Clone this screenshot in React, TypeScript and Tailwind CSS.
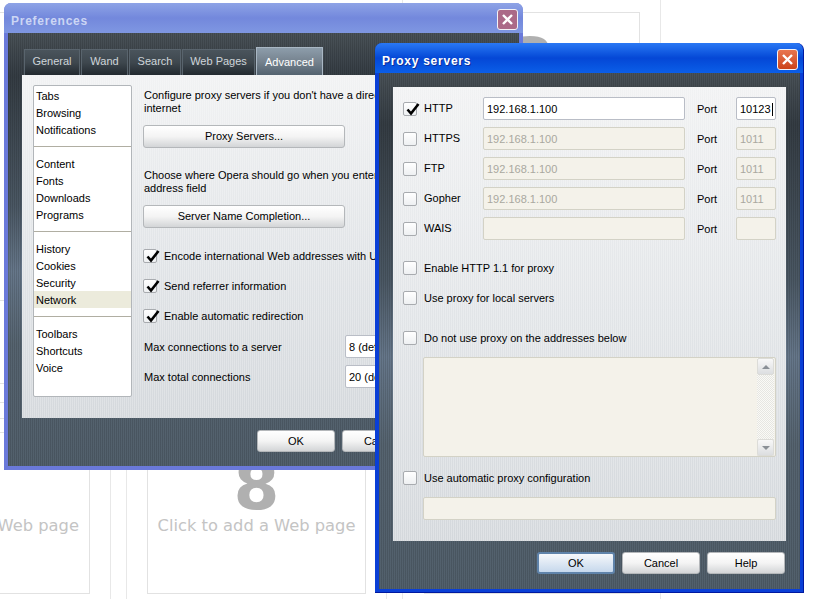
import type { ReactNode } from 'react';

const font = "font-['Liberation_Sans','DejaVu_Sans',sans-serif]";

function Check() {
  return (
    <svg width="16" height="14" viewBox="0 0 16 14" className="absolute left-[1px] top-[-1px] overflow-visible">
      <path d="M2.5 7.5 L6 11.5 L13.5 2" fill="none" stroke="#000" strokeWidth="2.6" />
    </svg>
  );
}

function CheckBox({ checked, raised, children }: { checked?: boolean; raised?: boolean; children?: ReactNode }) {
  return (
    <div className="flex items-center h-4 gap-[7px]">
      <div className="relative w-[14px] h-[14px] shrink-0 rounded-[2px] border border-[#a8abaf] bg-gradient-to-b from-white to-[#eef0f2]">
        {checked && <Check />}
      </div>
      {children && <span className={`whitespace-nowrap leading-none ${raised ? 'pb-[1px]' : ''}`}>{children}</span>}
    </div>
  );
}

function Btn({ children, w, primary }: { children: ReactNode; w: string; primary?: boolean }) {
  return (
    <button
      className={`${w} h-[22px] shrink-0 rounded-[3px] text-black ${
        primary
          ? 'border-2 border-[#5f83aa] bg-gradient-to-b from-[#f6f8fb] to-[#c6d8ec]'
          : 'border border-[#b4b7ba] bg-gradient-to-b from-white via-[#f4f4f4] to-[#d3d5d7]'
      }`}
    >
      {children}
    </button>
  );
}

function Field({ w, value, disabled, caret }: { w: string; value?: string; disabled?: boolean; caret?: boolean }) {
  return (
    <div
      className={`${w} h-[23px] shrink-0 flex items-center px-[3px] pt-[1px] rounded-[2px] border overflow-hidden whitespace-nowrap ${
        disabled ? 'bg-[#f4f2ea] border-[#d3d2c6] text-[#a9a8a0]' : 'bg-white border-[#b9bdc6] text-black'
      }`}
    >
      {value}
      {caret && <span className="inline-block w-px h-[13px] bg-black ml-px shrink-0" />}
    </div>
  );
}

function Tab({ label, w, active }: { label: string; w: string; active?: boolean }) {
  return (
    <div
      className={`${w} flex items-center justify-center border border-b-0 ${
        active
          ? 'h-[28px] pt-[2px] border-[#a9b7c4] text-white bg-gradient-to-b from-[#8d9dab] via-[#76838f] to-[#53626f]'
          : 'h-[26px] pb-[2px] border-[#59646d] text-[#cfd5da] bg-gradient-to-b from-[#4a545c] via-[#3e474e] to-[#232a30]'
      }`}
    >
      {label}
    </div>
  );
}

const bodyBg =
  '[background-image:repeating-linear-gradient(90deg,rgba(0,0,0,0.12)_0px,rgba(0,0,0,0.12)_1px,transparent_1px,transparent_2px),linear-gradient(180deg,#4a5258_0%,#353d44_10%,#4b5864_40%,#66778a_55%,#566470_72%,#52606c_100%)]';
const panelBg =
  '[background-image:repeating-linear-gradient(90deg,rgba(255,255,255,0.25)_0px,rgba(255,255,255,0.25)_1px,transparent_1px,transparent_2px),linear-gradient(180deg,#f1f2f3_0%,#e2e5e8_50%,#d4d8dc_100%)]';

function ListItem({ children, active }: { children: string; active?: boolean }) {
  return (
    <div className={`h-[17px] pt-[1px] leading-[16px] pl-[2px] ${active ? 'bg-[#ecebdc]' : ''}`}>{children}</div>
  );
}

function CloseBtn({ bg }: { bg: string }) {
  return (
    <div className={`${bg} w-[21px] h-[21px] rounded-[3px] border border-[#f2f2f6] flex items-center justify-center`}>
      <svg width="13" height="13" viewBox="0 0 13 13">
        <path d="M2 2 L11 11 M11 2 L2 11" stroke="#fff" strokeWidth="2.4" />
      </svg>
    </div>
  );
}

function Preferences() {
  return (
    <div className="absolute left-[4px] top-[3px] w-[519px] h-[467px] px-[4px] pb-[4px] flex flex-col rounded-t-[7px] bg-[#6a79da]">
      <div className="h-[30px] shrink-0 -mx-[4px] px-[7px] rounded-t-[7px] flex items-center justify-between bg-gradient-to-b from-[#8ea3e6] via-[#7388dc] to-[#7f97e2]">
        <span className="font-['Liberation_Sans',sans-serif] font-bold text-[12px] tracking-[0.75px] pt-[6px] text-[#ccd6f4]">Preferences</span>
        <div className="mr-[-2px] mt-[3px]">
          <CloseBtn bg="bg-[#ab6a88]" />
        </div>
      </div>
      <div className={`flex-1 flex flex-col ${bodyBg}`}>
        <div className="h-[42px] shrink-0 flex items-end gap-px pl-[16px]">
          <Tab label="General" w="w-[56px]" />
          <Tab label="Wand" w="w-[47px]" />
          <Tab label="Search" w="w-[52px]" />
          <Tab label="Web Pages" w="w-[73px]" />
          <Tab label="Advanced" w="w-[67px]" active />
        </div>
        <div className={`ml-[14px] w-[483px] h-[343px] shrink-0 flex pl-[11px] pt-[10px] overflow-hidden ${panelBg}`}>
          <div className="w-[99px] h-[312px] shrink-0 border border-[#b2b6ba] rounded-[2px] bg-white pt-[1px]">
            <ListItem>Tabs</ListItem>
            <ListItem>Browsing</ListItem>
            <ListItem>Notifications</ListItem>
            <div className="h-px bg-[#b0aea2] mt-[8px] mb-[8px]" />
            <ListItem>Content</ListItem>
            <ListItem>Fonts</ListItem>
            <ListItem>Downloads</ListItem>
            <ListItem>Programs</ListItem>
            <div className="h-px bg-[#b0aea2] mt-[8px] mb-[8px]" />
            <ListItem>History</ListItem>
            <ListItem>Cookies</ListItem>
            <ListItem>Security</ListItem>
            <ListItem active>Network</ListItem>
            <div className="h-px bg-[#b0aea2] mt-[8px] mb-[8px]" />
            <ListItem>Toolbars</ListItem>
            <ListItem>Shortcuts</ListItem>
            <ListItem>Voice</ListItem>
          </div>
          <div className="ml-[11px] flex-1 flex flex-col items-start">
            <p className="mt-[4px] ml-px leading-[13px] whitespace-nowrap">
              Configure proxy servers if you don't have a direct connection to the
              <br />
              internet
            </p>
            <div className="mt-[10px]">
              <Btn w="w-[202px] !h-[23px]">Proxy Servers...</Btn>
            </div>
            <p className="mt-[21px] ml-px leading-[13px] whitespace-nowrap">
              Choose where Opera should go when you enter a name in the
              <br />
              address field
            </p>
            <div className="mt-[10px]">
              <Btn w="w-[202px] !h-[23px]">Server Name Completion...</Btn>
            </div>
            <div className="mt-[20px] flex flex-col gap-[14px]">
              <CheckBox checked>Encode international Web addresses with UTF-8</CheckBox>
              <CheckBox checked>Send referrer information</CheckBox>
              <CheckBox checked>Enable automatic redirection</CheckBox>
            </div>
            <div className="mt-[11px] flex items-center">
              <span className="w-[202px] ml-px pt-[1px]">Max connections to a server</span>
              <Field w="w-[100px] -ml-px" value="8 (default)" />
            </div>
            <div className="mt-[7px] flex items-center">
              <span className="w-[202px] ml-px pt-[1px]">Max total connections</span>
              <Field w="w-[100px] -ml-px" value="20 (default)" />
            </div>
          </div>
        </div>
        <div className="mt-[12px] ml-[249px] flex gap-[7px]">
          <Btn w="w-[78px]">OK</Btn>
          <Btn w="w-[78px]">Cancel</Btn>
        </div>
      </div>
    </div>
  );
}

function ProxyRow({ label, value, port, checked, active }: { label: string; value?: string; port?: string; checked?: boolean; active?: boolean }) {
  return (
    <div className="flex items-center h-[23px]">
      <div className="w-[80px] shrink-0">
        <CheckBox checked={checked} raised>{label}</CheckBox>
      </div>
      <Field w="w-[202px]" value={value} disabled={!active} />
      <span className="w-[39px] ml-[12px] pt-[1px]">Port</span>
      <Field w="w-[40px]" value={port} disabled={!active} caret={active} />
    </div>
  );
}

function ProxyServers() {
  return (
    <div className="absolute left-[375px] top-[43px] w-[429px] h-[550px] pl-[4px] pr-[3px] pb-[3px] flex flex-col rounded-t-[7px] bg-[#0a3fd6] border-r border-b border-[#0019a0]">
      <div className="h-[30px] shrink-0 -ml-[4px] -mr-[3px] px-[7px] rounded-t-[7px] flex items-center justify-between bg-gradient-to-b from-[#2a78f4] via-[#0547d6] to-[#0c5ee8]">
        <span className="font-['Liberation_Sans',sans-serif] font-bold text-[12px] tracking-[0.75px] pt-[6px] text-white [text-shadow:1px_1px_0_#0a2f9c]">Proxy servers</span>
        <div className="mr-[-2px] mt-[3px]">
          <CloseBtn bg="bg-gradient-to-b from-[#e8754f] to-[#cc4318]" />
        </div>
      </div>
      <div className={`flex-1 pt-[14px] ${bodyBg}`}>
        <div className={`ml-[14px] w-[393px] h-[454px] pl-[10px] pt-[10px] ${panelBg}`}>
          <div className="flex flex-col gap-[7px]">
            <ProxyRow label="HTTP" value="192.168.1.100" port="10123" checked active />
            <ProxyRow label="HTTPS" value="192.168.1.100" port="1011" />
            <ProxyRow label="FTP" value="192.168.1.100" port="1011" />
            <ProxyRow label="Gopher" value="192.168.1.100" port="1011" />
            <ProxyRow label="WAIS" />
          </div>
          <div className="mt-[20px] flex flex-col gap-[14px]">
            <CheckBox>Enable HTTP 1.1 for proxy</CheckBox>
            <CheckBox>Use proxy for local servers</CheckBox>
          </div>
          <div className="mt-[24px]">
            <CheckBox>Do not use proxy on the addresses below</CheckBox>
          </div>
          <div className="mt-[11px] ml-[20px] w-[353px] h-[100px] flex justify-end rounded-[2px] border border-[#d3d2c6] bg-[#f4f2ea]">
            <div className="w-[17px] flex flex-col justify-between mr-px bg-[#f1f0ea] [background-image:repeating-conic-gradient(#e6e6e2_0%_25%,#fafaf6_0%_50%)] [background-size:2px_2px]">
              <div className="h-[17px] border border-[#dcdcd8] rounded-[2px] bg-gradient-to-b from-[#f8f8f8] to-[#dcdee0] flex items-center justify-center">
                <div className="w-0 h-0 border-x-[4px] border-x-transparent border-b-[4px] border-b-[#8a9096]" />
              </div>
              <div className="h-[17px] border border-[#dcdcd8] rounded-[2px] bg-gradient-to-b from-[#f8f8f8] to-[#dcdee0] flex items-center justify-center">
                <div className="w-0 h-0 border-x-[4px] border-x-transparent border-t-[4px] border-t-[#8a9096]" />
              </div>
            </div>
          </div>
          <div className="mt-[13px]">
            <CheckBox>Use automatic proxy configuration</CheckBox>
          </div>
          <div className="mt-[11px] ml-[20px]">
            <Field w="w-[353px]" disabled />
          </div>
        </div>
        <div className="mt-[11px] ml-[158px] flex gap-[7px]">
          <Btn w="w-[78px]" primary>OK</Btn>
          <Btn w="w-[78px]">Cancel</Btn>
          <Btn w="w-[78px]">Help</Btn>
        </div>
      </div>
    </div>
  );
}

// speed dial page behind the dialogs
function SpeedDial() {
  const digit = "absolute left-0 right-0 text-center text-[66px] leading-[80px] font-bold text-[#b0b0b0] font-['DejaVu_Sans',sans-serif]";
  const label = "absolute left-0 right-0 top-[214px] text-center text-[16.3px] leading-[22px] text-[#c4c4c4] font-['DejaVu_Sans',sans-serif] whitespace-nowrap";
  return (
    <div className="absolute inset-0 overflow-hidden">
      <div className="absolute left-[-130px] top-[300px] w-[220px] h-[294px] border border-[#e2e2e2]">
        <div className={label}>Click to add a Web page</div>
      </div>
      <div className="absolute left-[-20px] top-[300px] w-[131px] h-[320px] border-r border-[#e8e8e8]" />
      <div className="absolute left-[126px] top-[300px] w-[261px] h-[320px] border-x border-[#e8e8e8]" />
      <div className="absolute left-[147px] top-[300px] w-[219px] h-[294px] border border-[#e2e2e2]">
        <div className={`${digit} top-[146px]`}>8</div>
        <div className={label}>Click to add a Web page</div>
      </div>
      <div className="absolute left-[402px] top-[-20px] w-[259px] h-[640px] border-x border-[#e8e8e8] rounded-tr-[8px]" />
      <div className="absolute left-[424px] top-[12px] w-[216px] h-[582px] border border-[#e2e2e2]">
        <div className={`${digit} top-[10px]`}>3</div>
      </div>
      <div className="absolute left-0 top-[12px] w-[12px] h-px bg-[#e2e2e2]" />
      <div className="absolute left-0 top-[383px] w-[4px] h-px bg-[#e2e2e2]" />
      <div className="absolute left-0 top-[402px] w-[4px] h-px bg-[#e2e2e2]" />
      <div className="absolute left-0 top-[418px] w-[4px] h-px bg-[#e2e2e2]" />
      <div className="absolute left-0 top-[432px] w-[4px] h-px bg-[#e2e2e2]" />
    </div>
  );
}

export default function App() {
  return (
    <div className={`relative w-[813px] h-[599px] overflow-hidden bg-white text-[11px] text-black ${font}`}>
      <SpeedDial />
      <Preferences />
      <ProxyServers />
    </div>
  );
}
